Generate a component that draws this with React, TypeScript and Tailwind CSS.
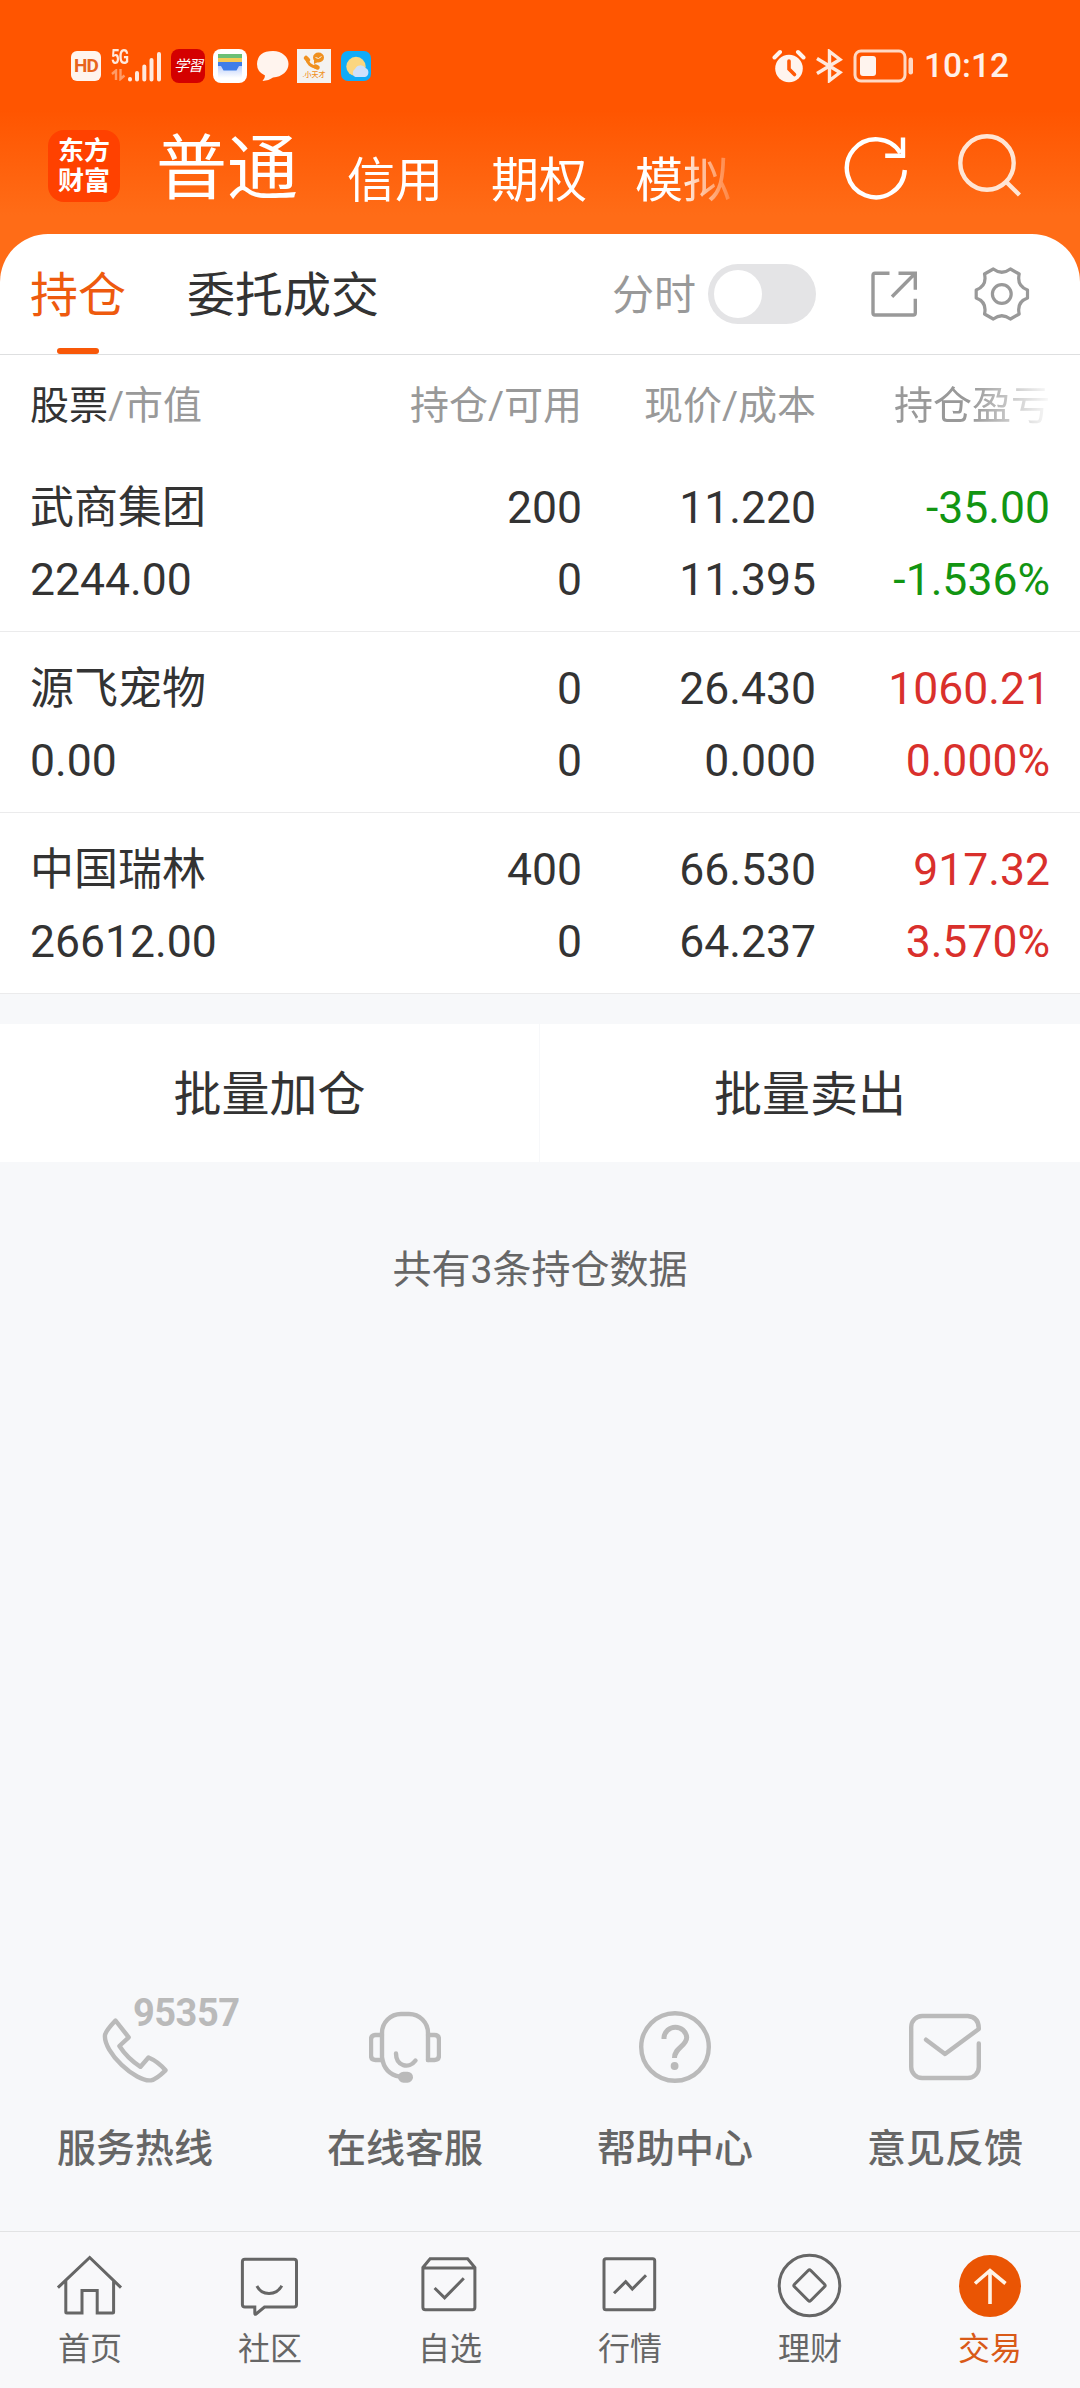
import type { ReactNode } from "react";
import clsx from "clsx";

type Holding = {
  name: string;
  value: string;
  amount: string;
  available: string;
  price: string;
  cost: string;
  profit: string;
  ratio: string;
  down?: boolean;
};

const holdings: Holding[] = [
  {
    name: "武商集团",
    value: "2244.00",
    amount: "200",
    available: "0",
    price: "11.220",
    cost: "11.395",
    profit: "-35.00",
    ratio: "-1.536%",
    down: true,
  },
  {
    name: "源飞宠物",
    value: "0.00",
    amount: "0",
    available: "0",
    price: "26.430",
    cost: "0.000",
    profit: "1060.21",
    ratio: "0.000%",
  },
  {
    name: "中国瑞林",
    value: "26612.00",
    amount: "400",
    available: "0",
    price: "66.530",
    cost: "64.237",
    profit: "917.32",
    ratio: "3.570%",
  },
];

export default function App() {
  return (
    <div className="flex h-[2388px] w-[1080px] flex-col overflow-hidden bg-[#f7f8fa] font-['Roboto','Noto_Sans_CJK_SC',sans-serif] text-[#333]">
      <div className="bg-[linear-gradient(#ff5500_0px,#ff5500_110px,#ff6c17_215px,#ff6c17_300px)]">
        <StatusBar />
        <TopNav />
        <div className="rounded-t-[48px] bg-white">
          <SubTabs />
          <TableHead />
        </div>
      </div>
      <div className="bg-white">
        {holdings.map((h) => (
          <HoldingRow key={h.name} h={h} />
        ))}
      </div>
      <div className="mt-[30px] flex h-[138px] bg-white text-[48px]">
        <button className="w-[540px] border-r border-[#f7f8fa] pt-[4px]">批量加仓</button>
        <button className="flex-1 pt-[4px]">批量卖出</button>
      </div>
      <p className="mt-[84px] text-center text-[39px] leading-[48px] text-[#666]">
        共有3条持仓数据
      </p>
      <Services />
      <TabBar />
    </div>
  );
}

function StatusBar() {
  return (
    <div className="flex h-[100px] items-center pt-[32px] pr-[71px] pl-[71px]">
      <div className="flex h-[30px] w-[30px] items-center justify-center rounded-[6px] bg-[#fff4ee] text-[19px] font-bold tracking-[-1px] text-[#e8641e]">
        HD
      </div>
      <SignalIcon />
      <div className="ml-[9px] flex h-[34px] w-[34px] items-center justify-center rounded-[8px] bg-[#d40000] text-[15px] tracking-[-1px] text-white italic">
        学習
      </div>
      <WalletIcon />
      <svg className="ml-[9px] h-[32px] w-[34px]" viewBox="0 0 34 32" fill="#fff4ee">
        <path d="M17 1C26 1 32.500 7 32.500 14S26 27 17 27.500Q13 30.500 6.500 31 9 28.500 9 25.500 1 22 1 14 1.500 1 17 1Z" />
      </svg>
      <div className="ml-[7px] flex h-[34px] w-[34px] flex-col items-center bg-[#f4f2f0] text-[#f0901e]">
        <svg className="h-[22px] w-[24px]" viewBox="0 0 24 22" fill="none" stroke="currentColor">
          <path d="M4.500 8.500C5 14 9 18 15 18" strokeWidth="3" />
          <path d="M4 9 6 11M13.500 17.500 15.500 18.500" strokeWidth="4.500" strokeLinecap="round" />
          <ellipse cx="16.500" cy="8.500" rx="5.500" ry="5" fill="currentColor" stroke="none" />
          <path d="M12 11v4l4-2Z" fill="currentColor" stroke="none" />
          <path d="M13.500 8.500Q16.500 11 19.500 7.500" stroke="#f4f2f0" />
        </svg>
        <span className="text-[7px] leading-[9px] font-medium whitespace-nowrap">.小天才</span>
      </div>
      <div className="ml-[10px] h-[30px] w-[30px] rounded-[7px] bg-[#10abf8]">
        <svg viewBox="0 0 30 30">
          <circle cx="15" cy="15.500" r="9.700" fill="#fbd680" />
          <path d="M14.500 26a4.500 4.500 0 0 1-.5-8 6 6 0 0 1 10.500-1 4.800 4.800 0 0 1-.5 9Z" fill="#cfe0fb" />
        </svg>
      </div>

      <svg className="ml-auto h-[34px] w-[34px]" viewBox="0 0 34 34" fill="none">
        <circle cx="17" cy="19.500" r="13.800" fill="#fff4ee" />
        <path d="M2.500 8.500 8 3M31.500 8.500 26 3" stroke="#fff4ee" strokeWidth="4" strokeLinecap="round" />
        <path d="M17 12v8l5.500 5.500" stroke="#ff5a08" strokeWidth="3.600" strokeLinecap="round" />
      </svg>
      <svg className="ml-[9px] h-[34px] w-[28px]" viewBox="0 0 28 34" fill="none" stroke="#ffe9dd" strokeWidth="3.400">
        <path d="M2 9.500 25 23.500 14.500 31.500V2.500L25 10.500 2 24.500" />
      </svg>
      <svg className="ml-[10px] h-[34px] w-[62px]" viewBox="0 0 62 34">
        <rect x="2" y="2" width="50" height="30" rx="6" fill="none" stroke="#ffd9c4" strokeWidth="3" />
        <rect x="7" y="7" width="16" height="20" rx="3" fill="#fff4ee" />
        <rect x="55.500" y="8.500" width="4.500" height="17" rx="2.200" fill="#ffd9c4" />
      </svg>
      <span className="ml-[9px] text-[33.5px] leading-none font-medium text-[#fff0e8]">10:12</span>
    </div>
  );
}

function SignalIcon() {
  return (
    <div className="ml-[10px] flex h-[34px] w-[51px] items-end text-[#ffe9dd]">
      <div className="relative h-full w-[16px]">
        <span className="absolute top-0 left-0 text-[20px] leading-[16px] font-bold tracking-[-1px] [transform-origin:left] [transform:scaleX(0.75)]">
          5G
        </span>
        <svg className="absolute bottom-[2px] left-0 h-[12px] w-[15px]" viewBox="0 0 15 12" fill="none" stroke="#ff9b66" strokeWidth="2.400">
          <path d="M1 5 5 1.500V11M9.500 0V10L13.500 6.500" />
        </svg>
      </div>
      <svg className="h-[34px] w-[35px]" viewBox="0 0 35 34" stroke="currentColor" strokeWidth="4" strokeLinecap="round">
        <path d="M3 30.500v-.5M10 30.500V24M17.300 30.500V17.500M24.500 30.500V11M32 30.500V5" />
      </svg>
    </div>
  );
}

function WalletIcon() {
  return (
    <svg className="ml-[8px] h-[34px] w-[34px]" viewBox="0 0 34 34">
      <defs>
        <linearGradient id="walletFade" x2="0" y2="1">
          <stop stopColor="#b9cdfb" />
          <stop offset="1" stopColor="#fff" />
        </linearGradient>
      </defs>
      <rect width="34" height="34" rx="8" fill="#fff" />
      <path d="M5 16h24v13H5Z" fill="url(#walletFade)" />
      <path d="M5 5h24v6H5Z" fill="#6bbf74" />
      <path d="M5 9h24v5H5Z" fill="#f2cb57" />
      <path d="M5 13h24v4h-3l-2.500 4.500h-13L8 17H5Z" fill="#3f7ee8" />
    </svg>
  );
}

function TopNav() {
  return (
    <div className="flex h-[134px] items-center pr-[58px] pl-[48px] text-white">
      <div className="mb-[2px] flex h-[72px] w-[72px] flex-col items-center justify-center rounded-[16px] bg-[#ff4100] pb-px text-[26px] leading-[30px] font-bold">
        <span>东方</span>
        <span>财富</span>
      </div>
      <div className="ml-[36px] flex w-[580px] items-center overflow-hidden pt-[3px] [mask-image:linear-gradient(90deg,#000_520px,transparent_588px)]">
        <span className="text-[71px] leading-[90px]">普通</span>
        <div className="ml-[49px] flex gap-[48px] pt-[24px] text-[48px] leading-[60px] whitespace-nowrap">
          <span>信用</span>
          <span>期权</span>
          <span>模拟</span>
        </div>
      </div>
      <svg className="ml-auto h-[68px] w-[68px] shrink-0" viewBox="0 0 68 68" fill="none" stroke="currentColor" strokeWidth="4.400">
        <path d="M63.800 37A29 29 0 1 1 59.500 20" />
        <path d="M62 4.500V24.500M44.200 22.700H64" />
      </svg>
      <svg className="ml-[45px] h-[68px] w-[68px] shrink-0 text-[#ffe5d4]" viewBox="0 0 68 68" fill="none" stroke="currentColor" strokeWidth="4.400">
        <circle cx="33" cy="30" r="26.700" />
        <path d="M51.800 48.500 65.500 62" />
      </svg>
    </div>
  );
}

function SubTabs() {
  return (
    <div className="flex h-[121px] border-b border-[#dedfe0] pr-[48px] pl-[30px] text-[48px]">
      <div className="flex flex-col items-center text-[#ee5a0e]">
        <span className="h-[114px] leading-[124px]">持仓</span>
        <span className="h-[6px] w-[42px] rounded-full bg-[#f85808]" />
      </div>
      <span className="ml-[61px] leading-[124px]">委托成交</span>
      <div className="ml-auto flex items-center text-[#999]">
        <span className="pt-[3px] text-[42px]">分时</span>
        <span className="ml-[12px] flex h-[60px] w-[108px] rounded-full bg-[#e4e4e6] p-[6px]">
          <span className="h-[48px] w-[48px] rounded-full bg-white" />
        </span>
        <svg className="ml-[54px] h-[48px] w-[48px]" viewBox="0 0 48 48" fill="none" stroke="currentColor" strokeWidth="3.400">
          <path d="M19.500 3.300H5Q3 3.300 3 5.300V43Q3 45 5 45H43.300Q45.300 45 45.300 43V28.700M28.500 3.300H45.300V19.700M44.500 4 22 26.700" />
        </svg>
        <svg className="ml-[54px] h-[60px] w-[60px]" viewBox="0 0 60 60" fill="none" stroke="currentColor" strokeWidth="3.200" strokeLinejoin="round">
          <path d="M21.300 5Q29.800 11.500 38.400 5L47.200 10Q44.500 22 55.500 26V34Q44.500 38 47.200 50L38.400 55Q29.800 48.500 21.300 55L12.500 50Q15.200 38 4.200 34V26Q15.200 22 12.500 10Z" />
          <circle cx="29.800" cy="30" r="9.400" />
        </svg>
      </div>
    </div>
  );
}

function TableHead() {
  return (
    <div className="grid h-[96px] grid-cols-[318px_234px_234px_234px] px-[30px] pt-[21px] text-right text-[39px] leading-[60px] text-[#999]">
      <span className="text-left">
        <span className="text-[#333]">股票</span>/市值
      </span>
      <span>持仓/可用</span>
      <span>现价/成本</span>
      <span className="[mask-image:linear-gradient(90deg,#000_155px,transparent_238px)]">持仓盈亏</span>
    </div>
  );
}

function HoldingRow({ h }: { h: Holding }) {
  return (
    <div className="grid h-[181px] grid-cols-[318px_234px_234px_234px] border-b border-[#ebebec] px-[30px] pt-[21px] text-right text-[44.5px] leading-[72px]">
      <Cell className="text-left" top={<span className="text-[44px]">{h.name}</span>} bottom={h.value} />
      <Cell top={h.amount} bottom={h.available} />
      <Cell top={h.price} bottom={h.cost} />
      <Cell
        className={h.down ? "text-[#129512]" : "text-[#d9302c]"}
        top={h.profit}
        bottom={h.ratio}
      />
    </div>
  );
}

function Cell({ top, bottom, className }: { top: ReactNode; bottom: ReactNode; className?: string }) {
  return (
    <div className={clsx("flex flex-col", className)}>
      <span className="h-[72px]">{top}</span>
      <span className="h-[72px]">{bottom}</span>
    </div>
  );
}

// Contact shortcuts above the tab bar
function Services() {
  return (
    <div className="mt-auto mb-[54px] grid grid-cols-4">
      <Service label="服务热线">
        <path d="M16.500 9.500 29.700 26.300 20.400 35Q28.500 47.500 41.500 55.800L49.500 46.500Q59 50.500 66.500 59.300 57 68.500 52 69.300C37 71.500 4 41 6 24Q7 19.500 16.500 9.500Z" />
      </Service>
      <Service label="在线客服">
        <path d="M59 49V22A19 19 0 0 0 40 3H32A19 19 0 0 0 13 22V46Q15 63 31 65.700" />
        <path d="M13 24H6.500Q2 24 2 28.500V44.500Q2 49 6.500 49H13M59 24H65.500Q70 24 70 28.500V44.500Q70 49 65.500 49H59" />
        <path d="M27 42.500C27 55 40 58.500 46.500 49.500" />
        <rect x="29" y="60.700" width="15" height="11" rx="5.500" fill="#bababa" stroke="none" />
      </Service>
      <Service label="帮助中心">
        <circle cx="36" cy="36" r="33.800" />
        <path d="M25 28V26.500A11.400 11.400 0 0 1 47.700 26.500C47.700 35 35.500 36.500 35.500 47" strokeWidth="5" strokeLinecap="butt" />
        <circle cx="35.600" cy="55" r="3.900" fill="#bababa" stroke="none" />
      </Service>
      <Service label="意见反馈">
        <path d="M69.800 32.500V56A11 11 0 0 1 58.800 67H13.200A11 11 0 0 1 2.200 56V16A11 11 0 0 1 13.200 5H58.800Q70 6 69.800 18L36 43 17 28.700" />
      </Service>
    </div>
  );
}

function Service({ label, children }: { label: string; children: ReactNode }) {
  return (
    <div className="flex flex-col items-center">
      <div className="relative text-[#bababa]">
        <svg className="h-[72px] w-[72px]" viewBox="0 0 72 72" fill="none" stroke="currentColor" strokeWidth="4.400" strokeLinecap="round" strokeLinejoin="round">
          {children}
        </svg>
        {label === "服务热线" && (
          <span className="absolute -top-[17px] left-[34px] text-[38px] leading-[38px] font-bold tracking-[-0.5px]">
            95357
          </span>
        )}
      </div>
      <span className="mt-[38px] text-[39px] leading-[56px] font-medium text-[#666]">{label}</span>
    </div>
  );
}

function TabBar() {
  return (
    <div className="grid h-[157px] shrink-0 grid-cols-6 border-t border-[#e2e3e4] bg-[#f8f8fa] pt-[18px] text-[#666]">
      <Tab label="首页">
        <path d="M3.900 37.700 35.700 7.500 67 37.700M11.800 31V62Q11.800 63 12.800 63H28V40.500H43.200V63H58.600Q59.600 63 59.600 62V31" />
      </Tab>
      <Tab label="社区">
        <path d="M8.400 11.800Q8.400 9.300 10.900 9.300H60Q62.500 9.300 62.500 11.800V54.500Q62.500 57 60 57H30.500L22 64Q20.800 65 20.800 63V57H10.900Q8.400 57 8.400 54.500Z" />
        <path d="M22.900 36C28 46 42 46 47.800 35.700" />
      </Tab>
      <Tab label="自选">
        <path d="M8.900 17.500 16.100 8.700H53.600L60.900 17.500V57.200Q60.900 59.700 58.400 59.700H11.400Q8.900 59.700 8.900 57.200ZM8.900 18H60.900" />
        <path d="M20.600 38 30.600 47.800 49.800 28.300" />
      </Tab>
      <Tab label="行情">
        <rect x="10" y="8.700" width="50.700" height="51" rx="2" />
        <path d="M20 43.300 31.700 31.700 38.300 39 52 25.300" />
      </Tab>
      <Tab label="理财">
        <circle cx="35.500" cy="35.500" r="30.300" />
        <path d="M34.200 20.500Q35.500 19.200 36.800 20.500L50.500 34.200Q51.800 35.500 50.500 36.800L36.800 50.500Q35.500 51.800 34.200 50.500L20.500 36.800Q19.200 35.500 20.500 34.200Z" />
      </Tab>
      <Tab label="交易" active>
        <circle cx="36" cy="36" r="31" fill="#ea5504" stroke="none" />
        <path d="M36 54V20.500M21 33.500 36 20.500 51.500 33.500" stroke="#fff3e6" strokeWidth="3.600" />
      </Tab>
    </div>
  );
}

function Tab({ label, active, children }: { label: string; active?: boolean; children: ReactNode }) {
  return (
    <div className={clsx("flex flex-col items-center", active && "text-[#d95a18]")}>
      <svg className="h-[72px] w-[72px]" viewBox="0 0 72 72" fill="none" stroke="currentColor" strokeWidth="3">
        {children}
      </svg>
      <span className="mt-[7px] text-[32px] leading-[40px]">{label}</span>
    </div>
  );
}
